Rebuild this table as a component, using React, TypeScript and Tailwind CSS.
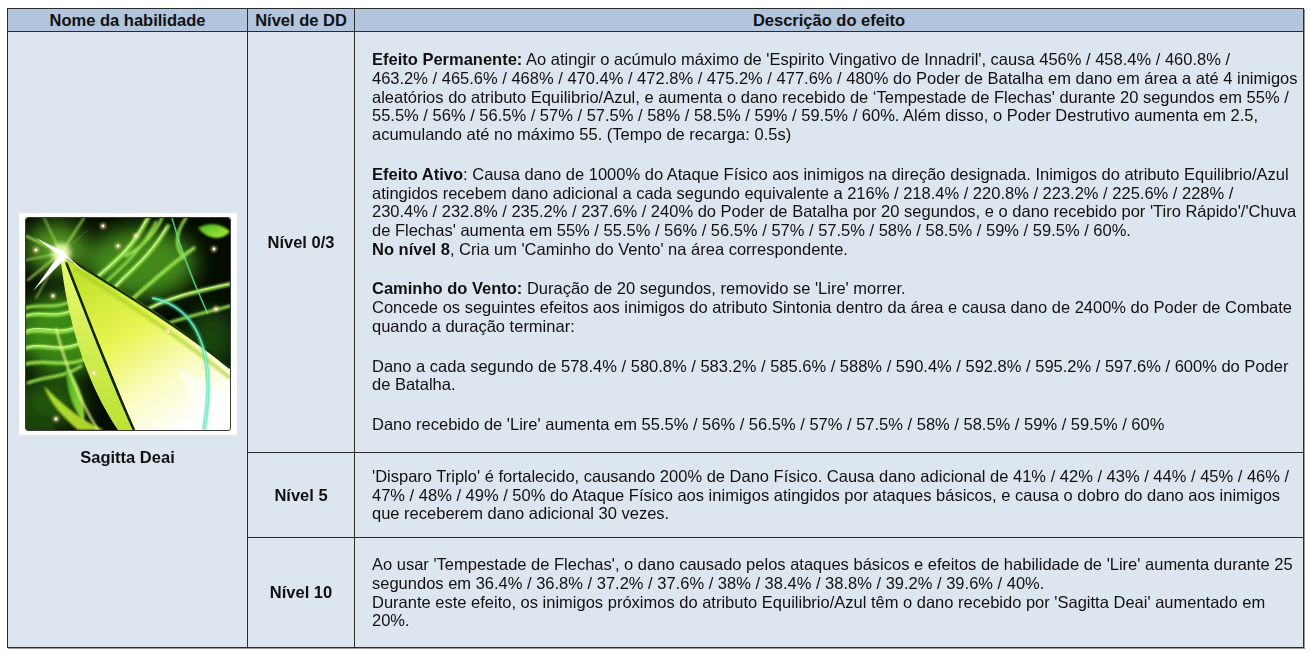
import React from "react";

function SkillIcon() {
  const dots = [
    [77, 8],
    [92, 28],
    [188, 31],
    [27, 78],
    [142, 113],
    [190, 91],
    [30, 201],
    [68, 155],
    [10, 32],
    [110, 18],
  ];

  return (
    <svg viewBox="0 0 204 212" className="block w-[204px] h-[212px]">
      <defs>
        <linearGradient id="blade" x1="0.15" y1="0.1" x2="0.7" y2="1">
          <stop offset="0" stopColor="#c4e22c" />
          <stop offset="0.4" stopColor="#e8f452" />
          <stop offset="0.72" stopColor="#fafcc0" />
          <stop offset="1" stopColor="#ffffff" />
        </linearGradient>
        <linearGradient id="strip" x1="0" y1="0" x2="0" y2="1">
          <stop offset="0" stopColor="#eaf970" />
          <stop offset="1" stopColor="#bce236" />
        </linearGradient>
        <linearGradient id="leaf" x1="0" y1="0" x2="1" y2="1">
          <stop offset="0" stopColor="#46b81c" />
          <stop offset="1" stopColor="#b0f042" />
        </linearGradient>
        <filter id="blob" x="-50%" y="-50%" width="200%" height="200%">
          <feGaussianBlur stdDeviation="10" />
        </filter>
        <filter id="soft" x="-20%" y="-20%" width="140%" height="140%">
          <feGaussianBlur stdDeviation="1.3" />
        </filter>
        <filter id="glow" x="-50%" y="-50%" width="200%" height="200%">
          <feGaussianBlur stdDeviation="2.4" />
        </filter>
      </defs>

      <rect width="204" height="212" fill="#050d03" />
      <g filter="url(#blob)">
        <ellipse cx="40" cy="115" rx="50" ry="40" fill="#44a018" opacity="0.85" />
        <ellipse cx="115" cy="45" rx="55" ry="35" fill="#52a81e" opacity="0.8" />
        <ellipse cx="25" cy="185" rx="35" ry="25" fill="#2c7410" opacity="0.7" />
        <ellipse cx="30" cy="30" rx="30" ry="25" fill="#6cc626" opacity="0.75" />
        <ellipse cx="185" cy="120" rx="25" ry="30" fill="#2a6a0e" opacity="0.6" />
      </g>

      {/* glowing fibres, left and top */}
      <g fill="none" stroke="#a2ec52" strokeLinecap="round" filter="url(#soft)" opacity="0.9">
        <path d="M0 90 C 14 84, 28 94, 52 80" strokeWidth="3" />
        <path d="M0 98 C 15 92, 30 104, 56 88" strokeWidth="4" />
        <path d="M0 114 C 18 108, 36 122, 60 104" strokeWidth="4.5" />
        <path d="M0 130 C 20 124, 32 138, 63 122" strokeWidth="4" />
        <path d="M0 146 C 22 140, 40 152, 66 138" strokeWidth="3.5" />
        <path d="M2 165 C 20 158, 38 160, 55 148" strokeWidth="3" />
        <path d="M68 62 C 88 44, 104 34, 122 0" strokeWidth="4.5" />
        <path d="M78 66 C 96 48, 112 38, 130 4" strokeWidth="2.5" />
        <path d="M86 72 C 104 52, 122 42, 142 8" strokeWidth="4" />
        <path d="M100 38 C 114 30, 128 18, 136 0" strokeWidth="3" />
        <path d="M105 82 C 124 66, 140 50, 168 30" strokeWidth="3.5" />
        <path d="M120 92 C 142 80, 168 74, 204 66" strokeWidth="4" />
        <path d="M140 106 C 162 98, 182 94, 204 88" strokeWidth="3" />
        <path d="M160 0 C 150 14, 148 28, 158 40" strokeWidth="3" />
      </g>
      <g fill="none" stroke="#e4ffb0" strokeLinecap="round" opacity="0.85">
        <path d="M2 112 C 18 106, 36 120, 58 104" strokeWidth="1.1" />
        <path d="M2 129 C 20 123, 32 137, 60 122" strokeWidth="1.1" />
        <path d="M2 97 C 16 91, 30 103, 54 88" strokeWidth="0.9" />
        <path d="M70 60 C 90 42, 104 32, 120 2" strokeWidth="1.1" />
        <path d="M88 70 C 106 50, 122 40, 140 10" strokeWidth="1.1" />
        <path d="M122 91 C 144 79, 168 73, 202 66" strokeWidth="1.1" />
      </g>

      {/* leaves */}
      <path d="M172 10 C 185 3, 198 7, 204 14 C 195 23, 182 22, 172 10 Z" fill="url(#leaf)" filter="url(#soft)" />
      <path d="M40 150 C 52 160, 60 185, 58 205 C 46 190, 40 170, 40 150 Z" fill="url(#leaf)" opacity="0.9" filter="url(#soft)" />
      <path d="M18 168 C 30 180, 50 200, 78 212 L 52 212 C 38 200, 24 186, 18 168 Z" fill="#c0e832" opacity="0.9" filter="url(#soft)" />
      <path d="M0 178 C 10 190, 20 200, 30 212 L 0 212 Z" fill="#1c4a0a" opacity="0.8" />

      {/* rays from the sparkle */}
      <g stroke="#b8f66c" strokeLinecap="round" opacity="0.8" filter="url(#soft)">
        <path d="M35 35 L 0 18" strokeWidth="2" />
        <path d="M35 35 L 2 62" strokeWidth="2" />
        <path d="M35 35 L 58 0" strokeWidth="2" />
        <path d="M35 35 L 0 42" strokeWidth="1.5" />
        <path d="M35 35 L 18 0" strokeWidth="1.5" />
        <path d="M35 35 L 10 80" strokeWidth="1.5" />
      </g>

      {/* blade */}
      <path d="M34 34 C 40 100, 60 165, 92 212 L 108 212 C 82 150, 58 95, 36 36 Z" fill="url(#strip)" />
      <path
        d="M36 36 C 78 62, 146 100, 204 150 L 204 212 L 108 212 C 84 150, 60 96, 36 36 Z"
        fill="url(#blade)"
      />
      <path d="M40 44 C 62 100, 82 155, 108 212" fill="none" stroke="#0d2606" strokeWidth="2.5" />
      <path d="M38 38 C 96 74, 156 110, 204 150" fill="none" stroke="#14340a" strokeWidth="2.5" />
      <path d="M48 50 C 96 82, 150 116, 204 160" fill="none" stroke="#a0cc24" strokeWidth="4" opacity="0.6" filter="url(#soft)" />
      <path d="M30 110 C 40 150, 55 185, 72 212" fill="none" stroke="#eefa86" strokeWidth="2" filter="url(#soft)" />
      <path d="M150 150 C 165 175, 172 195, 178 212 L 204 212 L 204 175 Z" fill="#ffffff" opacity="0.7" filter="url(#soft)" />

      {/* teal arc */}
      <path d="M126 80 C 168 88, 192 130, 178 212" fill="none" stroke="#3ed8a8" strokeWidth="3" filter="url(#soft)" />
      <path d="M126 80 C 168 88, 192 130, 178 212" fill="none" stroke="#c0ffea" strokeWidth="0.8" />
      <path d="M146 0 C 156 36, 168 66, 182 96" fill="none" stroke="#5ee6a0" strokeWidth="1.6" opacity="0.8" />

      {/* sparkle */}
      <circle cx="35" cy="35" r="10" fill="#f4ffb8" opacity="0.9" filter="url(#glow)" />
      <path
        d="M35 35 L 72 4 L 37 33 L 42 38 L 7 73 L 33 37 L 10 20 L 36 33 L 60 55 L 37 37 Z"
        fill="#ffffff"
      />
      <circle cx="35" cy="35" r="3" fill="#ffffff" />

      {/* glowing dots */}
      {dots.map(([x, y], i) => (
        <g key={i}>
          <circle cx={x} cy={y} r="3.2" fill="#ffd89a" opacity="0.55" filter="url(#soft)" />
          <circle cx={x} cy={y} r="1.4" fill="#fff6e0" />
        </g>
      ))}
    </svg>
  );
}

export default function App() {
  const cell = "border border-[#2b2b2b]";
  const desc = `${cell} pl-[17px] pr-0 leading-[18.7px]`;

  return (
    <div className="min-h-screen bg-white pl-[7px] pt-[8px] font-['Liberation_Sans',Arial,sans-serif] text-[16.5px] text-[#111]">
      <table className="w-[1297px] border-collapse table-fixed shadow-[1px_1px_0_#9a9a9a]">
        <colgroup>
          <col className="w-[240px]" />
          <col className="w-[107px]" />
          <col />
        </colgroup>
        <thead>
          <tr className="h-[23px] bg-[#b2c5dc]">
            <th className={`${cell} font-bold leading-[20px]`}>Nome da habilidade</th>
            <th className={`${cell} font-bold leading-[20px]`}>Nível de DD</th>
            <th className={`${cell} font-bold leading-[20px]`}>Descrição do efeito</th>
          </tr>
        </thead>
        <tbody className="bg-[#dde5ef]">
          <tr className="h-[421px]">
            <td rowSpan={3} className={`${cell} align-middle`}>
              <div className="flex flex-col items-center">
                <div className="bg-white px-[6px] py-[4px]">
                  <div className="rounded-[3px] border border-[#3a3a3a] overflow-hidden">
                    <SkillIcon />
                  </div>
                </div>
                <p className="mt-[13px] font-bold leading-[19px]">Sagitta Deai</p>
              </div>
            </td>
            <td className={`${cell} text-center font-bold`}>Nível 0/3</td>
            <td className={desc}>
              <div className="space-y-[21px]">
                <p>
                  <b>Efeito Permanente:</b> Ao atingir o acúmulo máximo de 'Espirito Vingativo de Innadril', causa 456% /
                  458.4% / 460.8% /<br />
                  463.2% / 465.6% / 468% / 470.4% / 472.8% / 475.2% / 477.6% / 480% do Poder de Batalha em dano em área a
                  até 4 inimigos aleatórios do atributo Equilibrio/Azul, e aumenta o dano recebido de ‘Tempestade de
                  Flechas' durante 20 segundos em 55% / 55.5% / 56% / 56.5% / 57% / 57.5% / 58% / 58.5% / 59% / 59.5% /
                  60%. Além disso, o Poder Destrutivo aumenta em 2.5, acumulando até no máximo 55. (Tempo de recarga:
                  0.5s)
                </p>
                <p>
                  <b>Efeito Ativo</b>: Causa dano de 1000% do Ataque Físico aos inimigos na direção designada. Inimigos do
                  atributo Equilibrio/Azul atingidos recebem dano adicional a cada segundo equivalente a 216% / 218.4% /
                  220.8% / 223.2% / 225.6% / 228% /<br />
                  230.4% / 232.8% / 235.2% / 237.6% / 240% do Poder de Batalha por 20 segundos, e o dano recebido por 'Tiro
                  Rápido'/'Chuva<br />
                  de Flechas' aumenta em 55% / 55.5% / 56% / 56.5% / 57% / 57.5% / 58% / 58.5% / 59% / 59.5% / 60%.
                  <br />
                  <b>No nível 8</b>, Cria um 'Caminho do Vento' na área correspondente.
                </p>
                <p>
                  <b>Caminho do Vento:</b> Duração de 20 segundos, removido se 'Lire' morrer.
                  <br />
                  Concede os seguintes efeitos aos inimigos do atributo Sintonia dentro da área e causa dano de 2400% do
                  Poder de Combate quando a duração terminar:
                </p>
                <p>
                  Dano a cada segundo de 578.4% / 580.8% / 583.2% / 585.6% / 588% / 590.4% / 592.8% / 595.2% / 597.6% /
                  600% do Poder de Batalha.
                </p>
                <p>Dano recebido de 'Lire' aumenta em 55.5% / 56% / 56.5% / 57% / 57.5% / 58% / 58.5% / 59% / 59.5% / 60%</p>
              </div>
            </td>
          </tr>
          <tr className="h-[85px]">
            <td className={`${cell} text-center font-bold`}>Nível 5</td>
            <td className={desc}>
              'Disparo Triplo' é fortalecido, causando 200% de Dano Físico. Causa dano adicional de 41% / 42% / 43% / 44% /
              45% / 46% / 47% / 48% / 49% / 50% do Ataque Físico aos inimigos atingidos por ataques básicos, e causa o dobro
              do dano aos inimigos que receberem dano adicional 30 vezes.
            </td>
          </tr>
          <tr className="h-[110px]">
            <td className={`${cell} text-center font-bold`}>Nível 10</td>
            <td className={desc}>
              Ao usar 'Tempestade de Flechas', o dano causado pelos ataques básicos e efeitos de habilidade de 'Lire'
              aumenta durante 25 segundos em 36.4% / 36.8% / 37.2% / 37.6% / 38% / 38.4% / 38.8% / 39.2% / 39.6% / 40%.
              <br />
              Durante este efeito, os inimigos próximos do atributo Equilibrio/Azul têm o dano recebido por 'Sagitta Deai'
              aumentado em 20%.
            </td>
          </tr>
        </tbody>
      </table>
    </div>
  );
}
